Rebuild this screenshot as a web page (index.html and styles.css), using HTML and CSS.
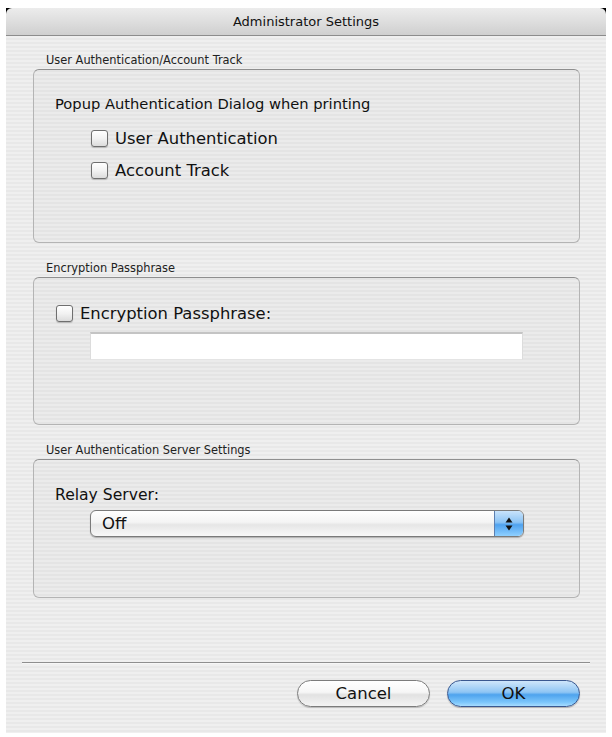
FILE: index.html
```html
<!DOCTYPE html>
<html>
<head>
<meta charset="utf-8">
<link rel="stylesheet" href="styles.css">
</head>
<body>
<div class="window">
  <div class="titlebar">Administrator Settings</div>
  <div class="content">
    <section class="group">
      <div class="group-label">User Authentication/Account Track</div>
      <div class="box box-auth">
        <div class="heading">Popup Authentication Dialog when printing</div>
        <div class="check-list">
          <label class="check"><span class="cb"></span>User Authentication</label>
          <label class="check"><span class="cb"></span>Account Track</label>
        </div>
      </div>
    </section>
    <section class="group">
      <div class="group-label">Encryption Passphrase</div>
      <div class="box box-pass">
        <label class="check"><span class="cb"></span>Encryption Passphrase:</label>
        <div class="field"></div>
      </div>
    </section>
    <section class="group">
      <div class="group-label">User Authentication Server Settings</div>
      <div class="box box-server">
        <div class="heading heading-relay">Relay Server:</div>
        <div class="popup">
          <span class="popup-text">Off</span>
          <span class="stepper">
            <svg width="8" height="16" viewBox="0 0 8 16"><path d="M4 1.5 L7.5 6.5 H0.5 Z" fill="#111"/><path d="M4 14.5 L7.5 9.5 H0.5 Z" fill="#111"/></svg>
          </span>
        </div>
      </div>
    </section>
  </div>
  <div class="footer">
    <div class="separator"></div>
    <div class="buttons">
      <button class="btn btn-cancel">Cancel</button>
      <button class="btn btn-ok">OK</button>
    </div>
  </div>
</div>
</body>
</html>
```

FILE: styles.css
```css
html, body {
  margin: 0;
  padding: 0;
  background: #ffffff;
}
body {
  width: 612px;
  height: 737px;
  font-family: "DejaVu Sans", "Liberation Sans", sans-serif;
  color: #111;
}
.window {
  margin: 8px 0 0 6px;
  width: 600px;
  height: 725px;
  background:
    linear-gradient(#000, #000) top left / 100% 6px no-repeat,
    repeating-linear-gradient(180deg, #efefef 0 2px, #e8e8e8 2px 4px);
  display: flex;
  flex-direction: column;
}
.titlebar {
  height: 27px;
  border-bottom: 1px solid #8c8c8c;
  border-radius: 6px 6px 0 0;
  background: linear-gradient(180deg, #ececec 0%, #dedede 50%, #cfcfcf 100%);
  text-align: center;
  font-size: 13px;
  line-height: 28px;
  color: #111;
}
.content {
  padding: 17px 26px 0 27px;
}
.group + .group {
  margin-top: 18px;
}
.group-label {
  font-size: 11.4px;
  line-height: 14px;
  height: 14px;
  padding-left: 13px;
  color: #222;
  margin-bottom: 2px;
}
.box {
  box-sizing: border-box;
  border: 1px solid #b4b4b4;
  border-top-color: #8f8f8f;
  border-radius: 6px;
  background: rgba(0, 0, 0, 0.015);
}
.box-auth {
  height: 174px;
  padding: 24px 0 0 21px;
}
.box-pass {
  height: 148px;
  padding: 26px 0 0 22px;
}
.box-server {
  height: 139px;
  padding: 26px 0 0 21px;
}
.heading {
  font-size: 14.7px;
  line-height: 20px;
}
.heading-relay {
  font-size: 15.6px;
  line-height: 18px;
}
.check-list {
  margin-top: 8px;
  padding-left: 36px;
}
.check {
  display: flex;
  align-items: center;
  height: 32px;
  font-size: 16.4px;
}
.box-pass .check {
  height: 18px;
}
.cb {
  box-sizing: border-box;
  width: 17px;
  height: 17px;
  margin-right: 7px;
  border: 1px solid #6f6f6f;
  border-radius: 3px;
  background: linear-gradient(180deg, #ffffff 0%, #f2f2f2 50%, #dcdcdc 100%);
  box-shadow: 0 1px 1px rgba(0, 0, 0, 0.2);
}
.field {
  box-sizing: border-box;
  margin: 10px 0 0 34px;
  width: 433px;
  height: 28px;
  background: #fff;
  border-top: 2px solid #c4c4c4;
  border-left: 1px solid #dcdcdc;
  border-right: 1px solid #dcdcdc;
  border-bottom: 1px solid #e4e4e4;
}
.popup {
  box-sizing: border-box;
  margin: 6px 0 0 35px;
  width: 434px;
  height: 27px;
  display: flex;
  border: 1px solid #7a7a7a;
  border-radius: 6px;
  background: linear-gradient(180deg, #ffffff 0%, #f4f4f4 45%, #e6e6e6 55%, #f8f8f8 100%);
  box-shadow: 0 1px 1px rgba(0, 0, 0, 0.25);
  overflow: hidden;
}
.popup-text {
  flex: 1;
  font-size: 16.5px;
  line-height: 25px;
  padding-left: 11px;
}
.stepper {
  width: 28px;
  display: flex;
  align-items: center;
  justify-content: center;
  border-left: 1px solid #5c7fb0;
  background: linear-gradient(180deg, #c9e3fb 0%, #8cc4f5 45%, #4fa2ef 55%, #8fd0ff 100%);
}
.footer {
  margin-top: 64px;
}
.separator {
  margin: 0 16px;
  height: 1px;
  background: #8e8e8e;
  border-bottom: 1px solid #f6f6f6;
}
.buttons {
  display: flex;
  justify-content: flex-end;
  gap: 17px;
  padding: 16px 26px 0 0;
}
.btn {
  box-sizing: border-box;
  width: 133px;
  height: 27px;
  border-radius: 14px;
  font-family: "DejaVu Sans", "Liberation Sans", sans-serif;
  font-size: 16.5px;
  line-height: 24px;
  color: #111;
  padding: 0;
}
.btn-cancel {
  border: 1px solid #7c7c7c;
  background: linear-gradient(180deg, #ffffff 0%, #f6f6f6 45%, #e2e2e2 55%, #f4f4f4 100%);
  box-shadow: 0 1px 1px rgba(0, 0, 0, 0.2);
}
.btn-ok {
  border: 1px solid #3a5890;
  background: linear-gradient(180deg, #cfe6fb 0%, #8ec5f4 45%, #4ea3ee 55%, #7cc6fb 85%, #a6dcff 100%);
  box-shadow: 0 1px 1px rgba(0, 0, 0, 0.25);
}
```
